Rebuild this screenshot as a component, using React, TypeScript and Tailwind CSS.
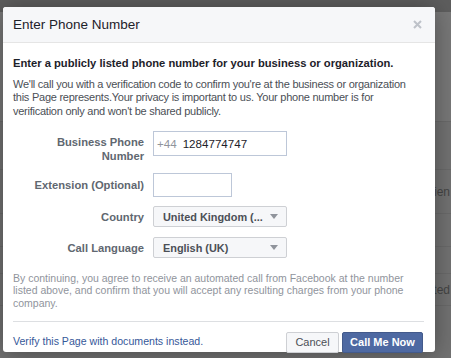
import React from "react";

function CaretDown() {
  return (
    <svg width="8" height="5" viewBox="0 0 8 5" className="shrink-0">
      <path d="M0 0h8L4 5z" fill="#90949c" />
    </svg>
  );
}

function FormRow({
  label,
  children,
  align = "center",
  className = "",
}: {
  label: React.ReactNode;
  children: React.ReactNode;
  align?: "center" | "start";
  className?: string;
}) {
  return (
    <div className={`flex gap-[9px] ${align === "center" ? "items-center" : "items-start"} ${className}`}>
      <div className={`w-[131px] text-right text-[11.2px] font-bold leading-[14px] text-[#606770] ${align === "start" ? "pt-[4px]" : ""}`}>
        {label}
      </div>
      {children}
    </div>
  );
}

function FakeSelect({ value }: { value: string }) {
  return (
    <div className="w-[134px] h-[21px] flex items-center justify-between pl-[9px] pr-[8px] bg-[#f6f7f9] border border-[#ced0d4] rounded-[2px]">
      <span className="text-[10.9px] font-bold text-[#4b4f56] whitespace-nowrap">{value}</span>
      <CaretDown />
    </div>
  );
}

export default function App() {
  return (
    <div className="relative w-[451px] h-[358px] overflow-hidden bg-[#727272] font-['Liberation_Sans',Arial,sans-serif]">
      {/* page behind the overlay */}
      <div className="h-[12px] bg-[#5e5e5e]" />
      <div className="h-[110px] bg-[#787878] border-b border-[#6a6a6a]" />
      <div className="h-[48px] border-b border-[#6a6a6a]" />
      <div className="h-[44px] border-b border-[#6a6a6a] flex items-center justify-end">
        <span className="text-[12px] text-[#454545] mr-[1px]">Audien</span>
      </div>
      <div className="h-[33px] border-b border-[#6a6a6a]" />
      <div className="h-[27px] border-b border-[#6a6a6a]" />
      <div className="h-[32px] border-b border-[#6a6a6a] flex items-center justify-end">
        <span className="text-[12px] text-[#454545] mr-[1px]">Listed</span>
      </div>

      {/* dialog */}
      <div className="absolute left-[3px] top-[7px] w-[432px] h-[345px] bg-white rounded-[3px] shadow-[0_2px_24px_rgba(0,0,0,0.35)] flex flex-col">
        <div className="h-[36px] shrink-0 flex items-center justify-between pl-[10px] pr-[13px] bg-[#f6f7f9] border-b border-[#e5e5e5] rounded-t-[3px]">
          <h2 className="text-[13.5px] text-[#1d2129] leading-[16px]">Enter Phone Number</h2>
          <svg width="9" height="9" viewBox="0 0 9 9">
            <path d="M1 1l7 7M8 1L1 8" stroke="#bec2c9" strokeWidth="2" />
          </svg>
        </div>

        <div className="flex-1 flex flex-col px-[10px] pt-[12px]">
          <p className="text-[11.2px] font-bold leading-[16px] text-[#1d2129]">
            Enter a publicly listed phone number for your business or organization.
          </p>
          <p className="mt-[7px] pr-[4px] text-[11px] tracking-[-0.25px] leading-[13.4px] text-[#4b4f56]">
            We'll call you with a verification code to confirm you're at the business or organization this Page represents.Your privacy is important to us. Your phone number is for verification only and won't be shared publicly.
          </p>

          <div className="mt-[13px] flex flex-col">
            <FormRow
              align="start"
              label={
                <>
                  Business Phone
                  <br />
                  Number
                </>
              }
            >
              <div className="w-[134px] h-[25px] flex items-center gap-[6px] pl-[3px] border border-[#bdc7d8] text-[11.6px]">
                <span className="text-[#90949c]">+44</span>
                <span className="text-[#1d2129]">1284774747</span>
              </div>
            </FormRow>
            <FormRow label="Extension (Optional)" className="mt-[10px]">
              <div className="w-[79px] h-[24px] border border-[#bdc7d8]" />
            </FormRow>
            <FormRow label="Country" className="mt-[9px]">
              <FakeSelect value="United Kingdom (..." />
            </FormRow>
            <FormRow label="Call Language" className="mt-[10px]">
              <FakeSelect value="English (UK)" />
            </FormRow>
          </div>

          <p className="mt-[14px] text-[10.5px] leading-[12.2px] text-[#90949c]">
            By continuing, you agree to receive an automated call from Facebook at the number listed above, and confirm that you will accept any resulting charges from your phone company.
          </p>

          <div className="mt-[12px] mr-[1px] border-t border-[#dddfe2]" />

          <div className="mt-[10px] flex items-center justify-between pr-[2px]">
            <a className="text-[10.6px] text-[#365899]">Verify this Page with documents instead.</a>
            <div className="flex gap-[3px]">
              <button className="h-[21px] w-[53px] text-[11px] text-[#4b4f56] bg-[#f6f7f9] border border-[#ced0d4] rounded-[2px]">
                Cancel
              </button>
              <button className="h-[21px] w-[81px] text-[11px] font-bold text-white bg-[#4e69a2] border border-[#435a8b] rounded-[2px]">
                Call Me Now
              </button>
            </div>
          </div>
        </div>
      </div>
    </div>
  );
}
